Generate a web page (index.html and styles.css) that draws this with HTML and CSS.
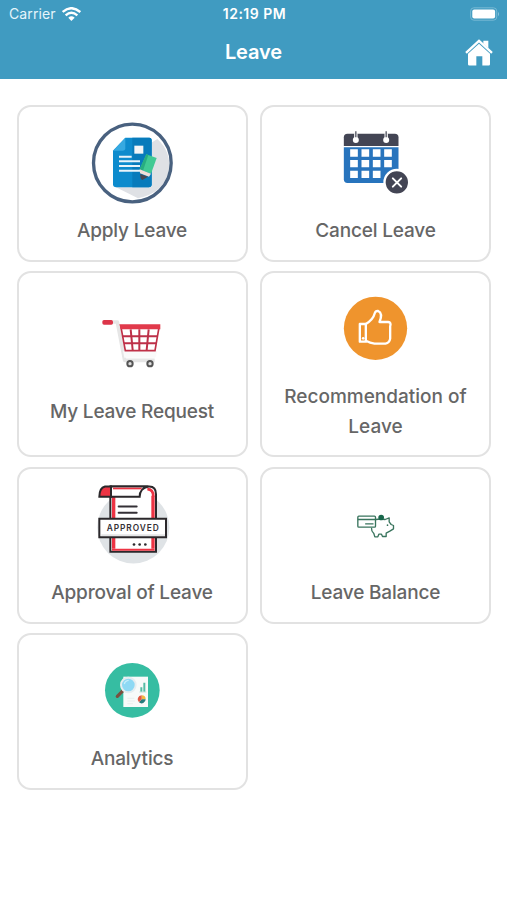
FILE: index.html
```html
<!DOCTYPE html>
<html lang="en">
<head>
<meta charset="utf-8">
<title>Leave</title>
<link rel="stylesheet" href="styles.css">
</head>
<body>
<header class="header">
  <div class="status">
    <div class="carrier"><span>Carrier</span>
      <svg class="wifi" viewBox="0 0 57 42"><g fill="none" stroke="#fff" stroke-width="7"><path d="M2 15Q28 -8 55 15"/><path d="M11 25Q28 9 46 25"/></g><path d="M19 32Q28 24 38 32L28 42Z" fill="#fff"/></svg>
    </div>
    <span class="time">12:19 PM</span>
    <svg class="battery" viewBox="0 0 92 42"><rect x="2" y="2" width="80" height="38" rx="10" fill="none" stroke="#78b9d4" stroke-width="3"/><rect x="7" y="7" width="70" height="28" rx="6" fill="#fff"/><path d="M86 14Q92 21 86 28Z" fill="#8fc5dc"/></svg>
  </div>
  <div class="navbar">
    <h1 class="title">Leave</h1>
    <svg class="home" viewBox="0 0 84 80"><path d="M3 41L42 5L81 41" fill="none" stroke="#fff" stroke-width="7"/><path d="M55 5h15v22L55 14Z" fill="#fff"/><path d="M9 44L42 14L75 44V75Q75 79 71 79H52V51H34V79H13Q9 79 9 75Z" fill="#fff"/></svg>
  </div>
</header>
<main class="grid">
  <a class="card">
    <svg class="icon" viewBox="0 14 300 258">
      <circle cx="151" cy="143" r="116" fill="#fff"/>
      <path d="M207 83L226 71Q268 109 261 165Q246 233 168 249L99 214H205Z" fill="#dfe1e5"/>
      <path d="M130 67H202Q209 67 209 75V207Q209 216 200 216H103Q93 216 93 207V106Z" fill="#0d8bcd"/>
      <path d="M151 67H202Q209 67 209 75V207Q209 216 200 216H151Z" fill="#087bbb"/>
      <path d="M93 106L130 67V99Q130 106 122 106Z" fill="#36a9e1"/>
      <path d="M157 91H184V115H157Z" fill="#f3f5f7"/>
      <path d="M111 124H149M111 138H174M111 152H174M111 166H174" stroke="#e9f4fa" stroke-width="6"/>
      <path d="M193 117L224 128L207 175L173 162Z" fill="#41ca94"/><path d="M193 117L199 119L183 166L173 162Z" fill="#28ad80"/>
      <path d="M173 162L207 175L201 184L174 174Z" fill="#f2dfd8"/><path d="M175 176L198 184L181 194Q174 191 175 176Z" fill="#4b4650"/>
      <circle cx="151" cy="143" r="116.5" fill="none" stroke="#49617f" stroke-width="10"/>
    </svg>
    <span class="label">Apply Leave</span>
  </a>
  <a class="card">
    <svg class="icon" viewBox="-13.5 0 300 258">
      <path d="M40 82H204V178Q204 189 193 189H51Q40 189 40 178Z" fill="#2874bd"/>
      <path d="M40 78V52Q40 41 51 41H193Q204 41 204 52V78Z" fill="#434554"/>
      <g fill="#fff"><circle cx="76" cy="60" r="9"/><circle cx="167" cy="60" r="9"/><path d="M71 40h10v16H71zM162 40h10v16H162z"/>
      <path d="M59 88h23v22H59zM93 88h23v22H93zM127 88h23v22H127zM161 88h23v22H161zM59 120h23v22H59zM93 120h23v22H93zM127 120h23v22H127zM161 120h23v22H161zM59 152h23v22H59zM93 152h23v22H93zM127 152h23v22H127z"/></g>
      <path d="M76 34V52M167 34V52" stroke="#535562" stroke-width="4"/>
      <circle cx="199" cy="187" r="37" fill="#434554" stroke="#fff" stroke-width="7"/>
      <path d="M187 175L212 200M212 175L187 200" stroke="#fff" stroke-width="6" stroke-linecap="round"/>
    </svg>
    <span class="label">Cancel Leave</span>
  </a>
  <a class="card tall">
    <svg class="icon" viewBox="-24 -12 300 258">
      <path d="M68 51H82L104 166H194" fill="none" stroke="#e6e6e6" stroke-width="11" stroke-linejoin="round"/>
      <path d="M99 137H202L196 158H103Z" fill="#fafafa"/>
      <rect x="37" y="45" width="32" height="14" rx="5" fill="#dc3549"/>
      <path d="M93 67H207L195 137H106Z" fill="#fff" stroke="#bf3148" stroke-width="5"/>
      <path d="M122 73L128 135M148 73V135M176 73L170 135M98 94H202M102 115H198" fill="none" stroke="#bd3049" stroke-width="6"/>
      <path d="M88 58H211V73H92Z" fill="#e13a4b"/>
      <g fill="#ddd" stroke="#555" stroke-width="6"><circle cx="120" cy="176" r="8"/><circle cx="180" cy="176" r="8"/></g>
    </svg>
    <span class="label">My Leave Request</span>
  </a>
  <a class="card tall">
    <svg class="icon" viewBox="-28.5 -13 300 258">
      <circle cx="120" cy="114" r="95" fill="#ef942d"/>
      <g fill="none" stroke="#fff" stroke-width="7" stroke-linejoin="round"><path d="M91 101Q113 88 118 68Q120 61 128 62Q143 69 132 95H158Q168 96 164 108V145Q162 158 150 160H117Q104 158 91 151"/><path d="M73 101H91V154H73Z"/></g>
      <circle cx="83" cy="144" r="4" fill="#fff"/>
    </svg>
    <span class="label wide">Recommendation of Leave</span>
  </a>
  <a class="card">
    <svg class="icon" viewBox="-9 20.5 300 258">
      <circle cx="145" cy="157" r="108" fill="#dfe3e6"/>
      <path d="M76 34H193Q213 34 213 57V230H76Z" fill="#fff" stroke="#2b282b" stroke-width="6"/>
      <path d="M86 65V221M204 62V221" fill="none" stroke="#ed3444" stroke-width="10"/>
      <path d="M81 224H209" stroke="#ed3444" stroke-width="6"/>
      <path d="M78 34H60Q43 38 43 65H78Z" fill="#ed3444" stroke="#2b282b" stroke-width="6"/>
      <path d="M78 34H190Q164 39 164 65H78Z" fill="#fff" stroke="#2b282b" stroke-width="6"/>
      <path d="M84 40H170" stroke="#ed3444" stroke-width="5"/>
      <path d="M187 42Q205 42 205 64" fill="none" stroke="#ed3444" stroke-width="8"/>
      <path d="M101 94H155M101 113H155" stroke="#343036" stroke-width="6" stroke-linecap="round"/>
      <path d="M43 131H243V186H43Z" fill="#fff" stroke="#2b282b" stroke-width="6"/><path d="M49 180H240" stroke="#e4e5e6" stroke-width="5"/>
      <text class="stamp" x="143" y="167" text-anchor="middle" textLength="156">APPROVED</text>
      <g fill="#2b282b"><circle cx="147" cy="208" r="4"/><circle cx="164" cy="208" r="4"/><circle cx="181" cy="208" r="4"/></g>
    </svg>
    <span class="label">Approval of Leave</span>
  </a>
  <a class="card">
    <svg class="icon" viewBox="-58.5 -69.5 300 258">
      <g fill="none" stroke="#39745d" stroke-width="4" stroke-linejoin="round"><rect x="37" y="33" width="53" height="33" rx="3"/><path d="M37 43H90M59 56H84"/><path d="M91 43Q104 40 119 43L131 38V50L137 58L144 61V71L133 78L122 84V94H111L108 87H100L97 95H88L85 85Q77 77 78 68"/></g>
      <circle cx="107" cy="37" r="8.5" fill="#17664a"/><circle cx="126" cy="60" r="2.5" fill="#39745d"/>
    </svg>
    <span class="label">Leave Balance</span>
  </a>
  <a class="card">
    <svg class="icon" viewBox="-39 -20 300 258">
      <circle cx="112" cy="107" r="82" fill="#36bda2"/>
      <path d="M85 66H159V157H85Z" fill="#f7faf9"/>
      <path d="M84 108L67 125" stroke="#79503f" stroke-width="10" stroke-linecap="round"/>
      <circle cx="100" cy="91" r="22" fill="#8ed9f4" stroke="#e5edf0" stroke-width="6"/><path d="M88 88Q90 78 101 77" fill="none" stroke="#c7effb" stroke-width="4"/>
      <path d="M139 98V111M148 84V111" stroke="#55bca4" stroke-width="6"/><path d="M133 112H154" stroke="#b0d8cd" stroke-width="2"/>
      <path d="M140 134V122A12 12 0 0 1 152 134Z" fill="#f1b940"/><path d="M140 134H152A12 12 0 0 1 132 143Z" fill="#267c7d"/><path d="M140 134L132 143A12 12 0 0 1 140 122Z" fill="#e05a45"/>
      <path d="M97 131H118M97 139H120M97 147H114" stroke="#e4eae8" stroke-width="2"/>
    </svg>
    <span class="label">Analytics</span>
  </a>
</main>
</body>
</html>
```
FILE: styles.css
```css
* { box-sizing: border-box; }
body { margin: 0; min-height: 900px; background: #fff; font-family: Inter, "Liberation Sans", sans-serif; }
.header { height: 79px; background: #409bc1; color: #fff; }
.status { height: 27px; padding: 0 7px 0 9px; display: grid; grid-template-columns: 1fr auto 1fr; align-items: center; font-size: 14px; }
.carrier { display: flex; align-items: center; gap: 6px; color: #e5f5fb; letter-spacing: .1px; }
.wifi { width: 19px; height: 14px; }
.time { font-weight: 600; letter-spacing: .5px; }
.battery { width: 30px; height: 14px; justify-self: end; }
.navbar { height: 50px; padding: 0 14px; display: grid; grid-template-columns: 28px 1fr 28px; align-items: center; }
.title { grid-column: 2; margin: 0; text-align: center; font-size: 20px; font-weight: 600; letter-spacing: -.1px; }
.home { width: 28px; height: 27px; }
.grid { display: grid; grid-template-columns: 231px 231px; grid-template-rows: 157px 186px 157px 157px; gap: 9.3px 12.5px; padding: 26px 16.5px; }
.card { display: flex; flex-direction: column; align-items: center; padding: 13px 20px 0; border: 2px solid #e2e2e2; border-radius: 14px; }
.tall { padding-top: 13px; }
.tall:nth-child(3) { padding-top: 28px; }
.icon { width: 100px; height: 86px; flex: none; }
.label { margin-top: 10px; color: #666; font-size: 19px; font-weight: 500; letter-spacing: -.18px; line-height: 29.5px; text-align: center; }
.wide { letter-spacing: 0; }
.stamp { font: 600 25px Inter, sans-serif; fill: #343036; }
```
